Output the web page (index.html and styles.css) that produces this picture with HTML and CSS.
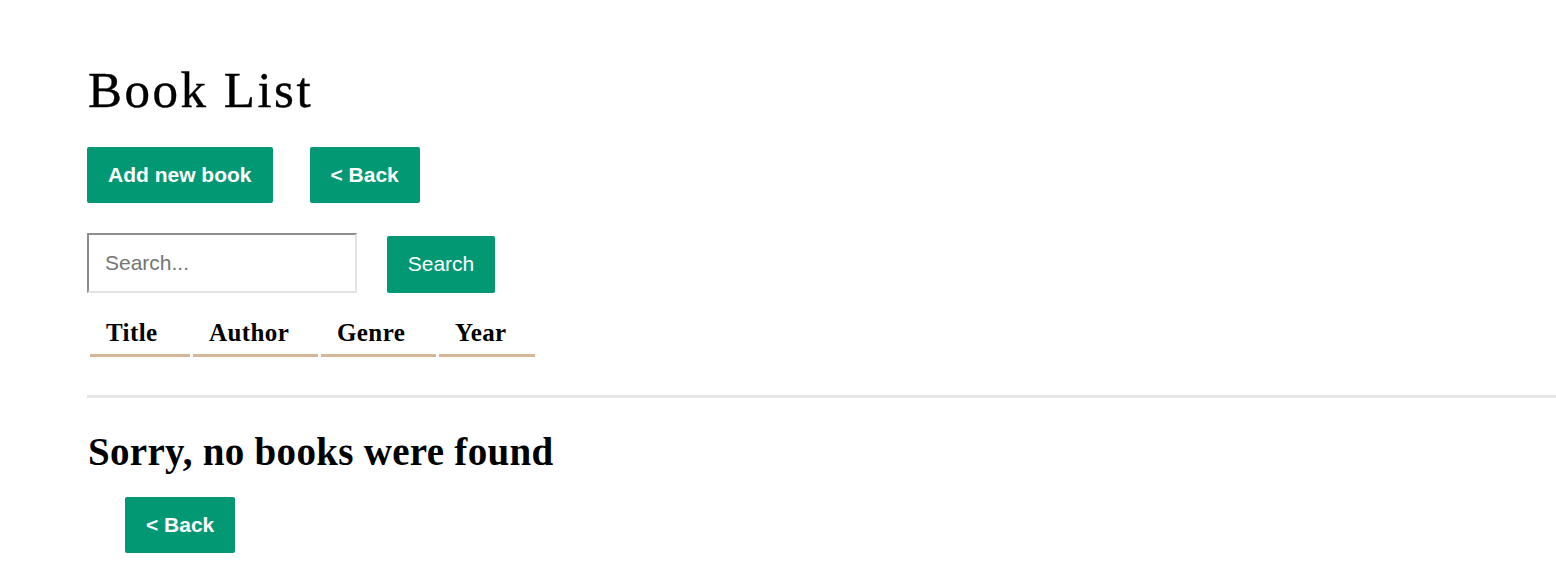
FILE: index.html
```html
<!DOCTYPE html>
<html lang="en">
<head>
<meta charset="utf-8">
<title>Book List</title>
<link rel="stylesheet" href="styles.css">
</head>
<body>
<main class="page">
  <h1 class="title">Book List</h1>
  <div class="actions">
    <a class="btn btn-bold" href="#">Add new book</a>
    <a class="btn btn-bold" href="#">&lt; Back</a>
  </div>
  <form class="search">
    <input class="search-input" type="text" placeholder="Search...">
    <button class="btn btn-plain" type="button">Search</button>
  </form>
  <table class="books">
    <thead>
      <tr>
        <th class="col-title">Title</th>
        <th class="col-author">Author</th>
        <th class="col-genre">Genre</th>
        <th class="col-year">Year</th>
      </tr>
    </thead>
  </table>
  <hr class="divider">
  <h2 class="empty">Sorry, no books were found</h2>
  <div class="empty-actions">
    <a class="btn btn-bold" href="#">&lt; Back</a>
  </div>
</main>
</body>
</html>
```

FILE: styles.css
```css
html, body {
  margin: 0;
  padding: 0;
  background: #ffffff;
}

body {
  font-family: "Liberation Serif", "Times New Roman", serif;
  color: #000000;
  overflow: hidden;
}

.page {
  padding-left: 87px;
}

.title {
  margin: 65px 0 0 1px;
  font-size: 51px;
  line-height: 50px;
  font-weight: normal;
  letter-spacing: 2.5px;
  -webkit-text-stroke: 0.4px #000000;
}

.actions {
  display: flex;
  gap: 37px;
  margin-top: 32px;
}

.btn {
  display: inline-block;
  box-sizing: border-box;
  background: #039874;
  color: #ffffff;
  text-decoration: none;
  border: none;
  border-radius: 2px;
  font-family: "Liberation Sans", Arial, sans-serif;
  font-size: 21px;
  line-height: 25px;
  padding: 15px 21px 16px;
  cursor: pointer;
}

.btn-bold {
  font-weight: bold;
}

.btn-plain {
  font-weight: normal;
  width: 108px;
  padding: 15px 0 17px;
  text-align: center;
}

.search {
  display: flex;
  align-items: flex-end;
  gap: 30px;
  margin-top: 30px;
}

.search-input {
  box-sizing: border-box;
  width: 270px;
  height: 60px;
  margin: 0;
  padding: 0 16px;
  border: 2px solid;
  border-color: #8d8d8d #e3e3e3 #e3e3e3 #8d8d8d;
  font-family: "Liberation Sans", Arial, sans-serif;
  font-size: 21px;
  color: #333333;
  outline: none;
}

.search-input::placeholder {
  color: #757575;
}

.books {
  margin-top: 16px;
  border-spacing: 3px;
  border-collapse: separate;
}

.books th {
  box-sizing: border-box;
  text-align: left;
  font-size: 25px;
  line-height: 30px;
  font-weight: bold;
  letter-spacing: 0.4px;
  padding: 6px 0 6px 16px;
  border-bottom: 3px solid #d5b697;
}

.books .col-title { width: 100px; }
.books .col-author { width: 125px; }
.books .col-genre { width: 115px; }
.books .col-year { width: 96px; }

.divider {
  margin: 35px 0 0 0;
  height: 3px;
  border: none;
  background: #e6e6e6;
}

.empty {
  margin: 31px 0 0 1px;
  font-size: 39px;
  line-height: 46px;
  font-weight: bold;
  letter-spacing: 0.3px;
}

.empty-actions {
  display: flex;
  margin: 22px 0 0 38px;
}
```
